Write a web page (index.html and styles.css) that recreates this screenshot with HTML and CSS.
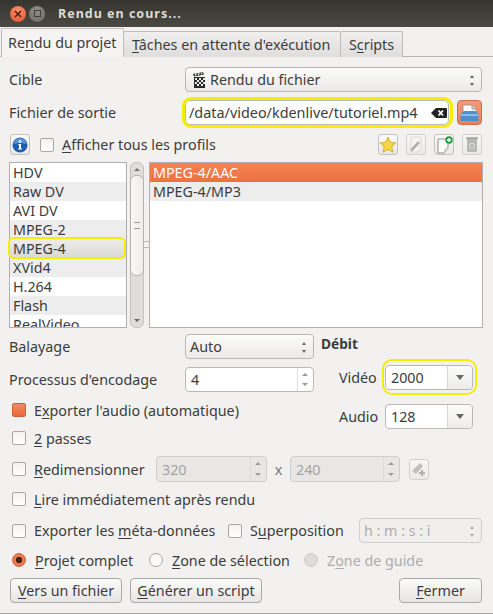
FILE: index.html
```html
<!DOCTYPE html>
<html lang="fr">
<head>
    <meta charset="UTF-8">
    <title>Rendu en cours...</title>
    <link rel="stylesheet" href="styles.css">
</head>
<body>
<div class="window">

    <!-- Title bar -->
    <div class="titlebar">
        <span class="win-btn win-close">
            <svg width="8" height="8" viewBox="0 0 8 8"><path d="M1 1L7 7M7 1L1 7" stroke="#4a1a10" stroke-width="1.5"/></svg>
        </span>
        <span class="win-btn win-max"><span class="win-max-box"></span></span>
        <span class="win-title">Rendu en cours...</span>
    </div>

    <!-- Tabs -->
    <div class="tabs">
        <div class="tab tab-active">Re<u>n</u>du du projet</div>
        <div class="tab"><u>T</u>âches en attente d'exécution</div>
        <div class="tab">S<u>c</u>ripts</div>
    </div>

    <div class="pane">
        <div class="row row-target">
            <span class="label">Cible</span>
            <div class="select select-target">
                <svg class="clap" width="13" height="16" viewBox="0 0 13 16">
                    <path d="M0 2L10 0L11 2.500L1 4.500Z" fill="#222"/>
                    <path d="M2 3.600L3.500 1.400M5 3L6.500 0.800M8 2.400L9.300 0.500" stroke="#eee" stroke-width="1.200"/>
                    <rect x="1" y="5" width="11" height="11" fill="#2b2b2b"/>
                    <path d="M2 6h2v2H2zM6 6h2v2H6zM10 6h2v2h-2zM4 8h2v2H4zM8 8h2v2H8zM2 10h2v2H2zM6 10h2v2H6zM10 10h2v2h-2zM4 12h2v2H4zM8 12h2v2H8z" fill="#e8e8e8"/>
                </svg>
                <span>Rendu du fichier</span>
                <span class="arrows"></span>
            </div>
        </div>

        <div class="row row-output">
            <span class="label">Fichier de sortie</span>
            <div class="input input-output">
                <span>/data/video/kdenlive/tutoriel.mp4</span>
                <svg width="16" height="10" viewBox="0 0 16 10"><path d="M0 5L5 0H15Q16 0 16 1V9Q16 10 15 10H5Z" fill="#222"/><path d="M7.500 2.500L12 7.500M12 2.500L7.500 7.500" stroke="#fff" stroke-width="1.800"/></svg>
            </div>
            <div class="file-btn">
                <svg width="19" height="18" viewBox="0 0 19 18">
                    <path d="M3 1H12L16 5V9H3Z" fill="#fbfbfb" stroke="#8a8f99" stroke-width="0.800"/>
                    <path d="M12 1V5H16" fill="#d5d8de" stroke="#8a8f99" stroke-width="0.800"/>
                    <path d="M0.500 10L4 7H15L18.500 10V17H0.500Z" fill="#4f8fd0"/>
                    <path d="M0.500 10H18.500V12H0.500Z" fill="#8fbbe6"/>
                </svg>
            </div>
        </div>

        <div class="row row-profiles">
            <div class="tool-btn info-btn">
                <svg width="16" height="16" viewBox="0 0 16 16"><circle cx="8" cy="8" r="7.500" fill="#1c5fb0"/><path d="M1.500 7A6.500 6 0 0 1 14.500 7Q8 5 1.500 7Z" fill="#5b95d8"/><circle cx="8" cy="4.500" r="1.300" fill="#fff"/><path d="M6.300 7H9V11.500H10V12.500H6V11.500H7V8H6.300Z" fill="#fff"/></svg>
            </div>
            <span class="check check-profiles"></span>
            <span class="check-label"><u>A</u>fficher tous les profils</span>
            <div class="tool-group">
                <div class="tool-btn">
                    <svg width="18" height="17" viewBox="0 0 18 17"><path d="M9 1L11.400 6.200L17 6.900L12.800 10.700L14 16.300L9 13.400L4 16.300L5.200 10.700L1 6.900L6.600 6.200Z" fill="#f6d743" stroke="#c9a227" stroke-width="0.800"/></svg>
                </div>
                <div class="tool-btn tool-off">
                    <svg width="16" height="17" viewBox="0 0 16 17"><path d="M3 1H13V12L10 16H3Z" fill="#f6f6f5" stroke="#c4c4c2" stroke-width="0.800"/><path d="M2 14L10 5L12 7L4 15.500Z" fill="#8b8b8b"/></svg>
                </div>
                <div class="tool-btn">
                    <svg width="17" height="18" viewBox="0 0 17 18"><path d="M2 3H12V12L8 17H2Z" fill="#fbfbfb" stroke="#777" stroke-width="0.800"/><path d="M8 17L8.500 12.500H12Z" fill="#ccc"/><circle cx="13" cy="4" r="3.700" fill="#1f9e3a"/><path d="M13 2V6M11 4H15" stroke="#fff" stroke-width="1.400"/></svg>
                </div>
                <div class="tool-btn tool-off">
                    <svg width="14" height="17" viewBox="0 0 14 17"><path d="M2 3H12V15Q12 16 11 16H3Q2 16 2 15Z" fill="#9b9b9b"/><rect x="1" y="1" width="12" height="2.500" rx="1" fill="#858585"/><circle cx="7" cy="10" r="2.700" fill="none" stroke="#d4d4d4" stroke-width="1"/></svg>
                </div>
            </div>
        </div>

        <!-- Format and profile lists -->
        <div class="lists">
            <div class="list list-formats">
                <div class="item">HDV</div>
                <div class="item">Raw DV</div>
                <div class="item">AVI DV</div>
                <div class="item">MPEG-2</div>
                <div class="item item-current">MPEG-4</div>
                <div class="item">XVid4</div>
                <div class="item">H.264</div>
                <div class="item">Flash</div>
                <div class="item">RealVideo</div>
            </div>
            <span class="item-mark"></span>
            <div class="scrollbar">
                <span class="scroll-arrow scroll-up"></span>
                <div class="scroll-thumb"><span class="grip"></span></div>
                <span class="scroll-arrow scroll-down"></span>
            </div>
            <span class="splitter"></span>
            <div class="list list-profiles">
                <div class="item item-selected">MPEG-4/AAC</div>
                <div class="item">MPEG-4/MP3</div>
            </div>
        </div>

        <!-- Encoding options and bitrate -->
        <div class="options">
            <div class="options-left">
                <div class="row row-scan">
                    <span class="label">Balayage</span>
                    <div class="select select-scan"><span>Auto</span><span class="arrows"></span></div>
                </div>
                <div class="row row-threads">
                    <span class="label">Processus d'encodage</span>
                    <div class="spin spin-threads"><span class="spin-value">4</span><span class="spin-btns"></span></div>
                </div>
                <div class="row row-audio">
                    <span class="check check-on"></span>
                    <span class="check-label">E<u>x</u>porter l'audio (automatique)</span>
                </div>
                <div class="row row-passes">
                    <span class="check"></span>
                    <span class="check-label"><u>2</u> passes</span>
                </div>
            </div>
            <div class="options-right">
                <div class="bitrate-title">Débit</div>
                <div class="row row-video">
                    <span class="bitrate-label">Vidéo</span>
                    <div class="combo combo-mark"><span class="combo-value">2000</span><span class="combo-btn"></span></div>
                </div>
                <div class="row row-audiorate">
                    <span class="bitrate-label">Audio</span>
                    <div class="combo"><span class="combo-value">128</span><span class="combo-btn"></span></div>
                </div>
            </div>
        </div>

        <div class="row row-resize">
            <span class="check"></span>
            <span class="check-label resize-label"><u>R</u>edimensionner</span>
            <div class="spin spin-off spin-width"><span class="spin-value">320</span><span class="spin-btns"></span></div>
            <span class="times">x</span>
            <div class="spin spin-off"><span class="spin-value">240</span><span class="spin-btns"></span></div>
            <div class="tool-btn tool-off link-btn">
                <svg width="16" height="16" viewBox="0 0 16 16"><path d="M1 10L9 2L12 5L5 13Z" fill="#a5a5a5"/><path d="M11 9V15M8 12H14" stroke="#8f8f8f" stroke-width="2"/></svg>
            </div>
        </div>

        <div class="row row-play">
            <span class="check"></span>
            <span class="check-label"><u>L</u>ire immédiatement après rendu</span>
        </div>

        <div class="row row-meta">
            <span class="check"></span>
            <span class="check-label meta-label">Exporter les <u>m</u>éta-données</span>
            <span class="check"></span>
            <span class="check-label overlay-label">S<u>u</u>perposition</span>
            <div class="select select-off"><span>h : m : s : i</span><span class="arrows"></span></div>
        </div>

        <div class="row row-range">
            <span class="radio radio-on"></span>
            <span class="check-label radio-label range-full"><u>P</u>rojet complet</span>
            <span class="radio"></span>
            <span class="check-label radio-label range-zone"><u>Z</u>one de sélection</span>
            <span class="radio radio-off"></span>
            <span class="check-label radio-label label-off">Z<u>o</u>ne de guide</span>
        </div>

        <div class="row row-buttons">
            <div class="button btn-file"><u>V</u>ers un fichier</div>
            <div class="button btn-script"><u>G</u>énérer un script</div>
            <div class="button btn-close"><u>F</u>ermer</div>
        </div>
    </div>
</div>
</body>
</html>
```

FILE: styles.css
```css
* { box-sizing: border-box; }

html, body {
    margin: 0;
    padding: 0;
}

body {
    width: 493px;
    height: 614px;
    overflow: hidden;
    background-color: #f2f1f0;
    font-family: "Noto Sans", "Open Sans", sans-serif;
    font-size: 14.3px;
    color: #3c3c3c;
}

u { text-underline-offset: 2px; }

.window {
    display: flex;
    flex-direction: column;
    height: 614px;
    border-bottom: 1px solid #a5a4a2;
}

/* Title bar */
.titlebar {
    height: 27px;
    display: flex;
    align-items: center;
    padding-left: 10px;
    background: linear-gradient(#35342f, #4a4944);
}

.win-btn {
    width: 16px;
    height: 16px;
    border-radius: 50%;
    display: flex;
    align-items: center;
    justify-content: center;
}

.win-close { background: radial-gradient(circle at 50% 30%, #f8906a, #e0502a); }

.win-max {
    margin-left: 3px;
    background: radial-gradient(circle at 50% 30%, #8f8e88, #6a6963);
}

.win-max-box {
    width: 7px;
    height: 7px;
    border: 1px solid #3e3d39;
}

.win-title {
    margin-left: 13px;
    font-weight: 700;
    font-size: 12.5px;
    letter-spacing: 1px;
    color: #dfdbd2;
}

/* Tabs */
.tabs {
    height: 30px;
    display: flex;
    align-items: flex-end;
    padding-left: 1px;
    border-bottom: 1px solid #b6b5b3;
    background-color: #f2f1f0;
}

.tab {
    height: 26px;
    padding: 0 8px;
    line-height: 25px;
    background: linear-gradient(#f0efee, #dfdedc);
    border: 1px solid #bdbcba;
    border-bottom: none;
    border-left: none;
    border-radius: 2px 2px 0 0;
    margin-bottom: -1px;
    white-space: nowrap;
}

.tab:nth-child(2) { width: 217px; padding-left: 8px; }
.tab:nth-child(3) { width: 62px; }

.tab-active {
    width: 123px;
    height: 29px;
    padding: 0 6px;
    line-height: 27px;
    background: #f5f4f3;
    border-left: 1px solid #bdbcba;
    border-bottom: 1px solid #f5f4f3;
    position: relative;
}

/* Main pane */
.pane {
    flex: 1;
    padding: 10px 10px 0 9px;
}

.row {
    display: flex;
    align-items: center;
}

.label { width: 176px; }

.row-target { height: 25px; }
.row-output { height: 25px; margin-top: 8px; }
.row-profiles { height: 21px; margin-top: 9px; padding-left: 1px; }

/* Dropdowns, inputs and spin boxes */
.select, .input, .spin, .combo {
    height: 25px;
    display: flex;
    align-items: center;
    background-color: #fff;
    border: 1px solid #b9b8b6;
    border-radius: 4px;
}

.select {
    padding: 0 0 0 7px;
    background: linear-gradient(#fbfbfa, #ebeae8);
    justify-content: space-between;
}

.select-target { width: 297px; }
.select-scan { width: 129px; padding-left: 4px; }

.clap { margin-right: 4px; flex: none; }
.select-target > span:first-of-type { flex: 1; }

.arrows {
    position: relative;
    width: 16px;
    height: 14px;
    flex: none;
}

.arrows::before, .arrows::after {
    content: "";
    position: absolute;
    left: 5px;
    border-left: 2.5px solid transparent;
    border-right: 2.5px solid transparent;
}

.arrows::before { top: 2px; border-bottom: 3px solid #666; }
.arrows::after { bottom: 1px; border-top: 3px solid #666; }

.input-output {
    width: 264px;
    position: relative;
    justify-content: space-between;
    padding: 0 1px 0 3px;
    border-radius: 5px;
    font-size: 14.4px;
}

.input-output svg { flex: none; }

.input-output::before {
    content: "";
    position: absolute;
    inset: -4px -5px -4px -4px;
    border: 3px solid #f4ee00;
    border-radius: 9px;
}

.file-btn {
    width: 25px;
    height: 25px;
    margin-left: 8px;
    display: flex;
    align-items: center;
    justify-content: center;
    background: linear-gradient(#f49a78, #ec8058);
    border: 1px solid #c8704d;
    border-radius: 4px;
}

.tool-btn {
    width: 20px;
    height: 21px;
    display: flex;
    align-items: center;
    justify-content: center;
    flex: none;
    background: linear-gradient(#fbfbfa, #e9e8e6);
    border: 1px solid #c2c1bf;
    border-radius: 3px;
}

.tool-off { opacity: 0.65; }

.tool-group {
    margin-left: auto;
    margin-right: 1px;
    display: flex;
    gap: 8px;
}

/* Checks and radios */
.check {
    width: 14px;
    height: 14px;
    flex: none;
    background: linear-gradient(#f3f2f1, #fff);
    border: 1px solid #a9a8a6;
    border-radius: 2px;
}

.check-on {
    background: linear-gradient(#f28a60, #e8683c);
    border-color: #c9623c;
}

.check-label {
    margin-left: 8px;
    white-space: nowrap;
}

.check-profiles { margin-left: 10px; }

.radio {
    width: 14px;
    height: 14px;
    flex: none;
    border-radius: 50%;
    background: linear-gradient(#f5f4f3, #fff);
    border: 1px solid #a9a8a6;
}

.radio-on {
    background: radial-gradient(circle, #4a2417 0 3px, #ee7a4e 3.5px);
    border-color: #c9623c;
}

.radio-off {
    background: #dddcda;
    border-color: #cfcecc;
}

.radio-label { margin-left: 9px; }
.label-off { color: #aeadab; }

/* Lists */
.lists {
    position: relative;
    display: flex;
    height: 166px;
    margin-top: 7px;
}

.list {
    height: 166px;
    overflow: hidden;
    background-color: #fff;
    border: 1px solid #b0afad;
}

.list-formats { width: 118px; }
.list-profiles { width: 334px; }

.item {
    height: 19px;
    line-height: 19px;
    padding-left: 3px;
    white-space: nowrap;
}

.item:nth-child(even) { background-color: #ededed; }

.item-current { background: linear-gradient(#eeedec, #dad9d6); }

/* yellow marking drawn over the list */
.item-mark {
    position: absolute;
    left: -1px;
    top: 75px;
    width: 118px;
    height: 22px;
    border: 2px solid #f4ee00;
    border-radius: 6px;
}

.item-selected {
    background: linear-gradient(#f58252, #ee7040);
    color: #fff;
}

.scrollbar {
    width: 14px;
    height: 166px;
    margin-left: 3px;
    position: relative;
    background: #dfdedc;
    border: 1px solid #c4c3c1;
    border-radius: 6px;
}

.scroll-arrow {
    position: absolute;
    left: 3px;
    border-left: 3px solid transparent;
    border-right: 3px solid transparent;
}

.scroll-up { top: 5px; border-bottom: 3px solid #777; }
.scroll-down { bottom: 5px; border-top: 3px solid #666; }

.scroll-thumb {
    position: absolute;
    left: -1px;
    top: 12px;
    width: 14px;
    height: 101px;
    display: flex;
    align-items: center;
    justify-content: center;
    background: linear-gradient(90deg, #f8f8f7, #eeedec);
    border: 1px solid #b4b3b1;
    border-radius: 6px;
}

.grip {
    width: 6px;
    height: 7px;
    border-top: 1px solid #999;
    border-bottom: 1px solid #999;
}

.splitter {
    width: 5px;
    margin: 79px 0 0 0;
    height: 7px;
    border-top: 1px solid #bbb;
    border-bottom: 1px solid #bbb;
}

/* Options block */
.options {
    display: flex;
    margin-top: 6px;
    height: 118px;
}

.options-left { width: 312px; }
.options-right { flex: 1; }

.row-scan { height: 25px; }
.row-threads { height: 25px; margin-top: 8px; }
.row-audio { height: 16px; margin-top: 10px; padding-left: 3px; }
.row-passes { height: 16px; margin-top: 12px; padding-left: 3px; }

.spin { padding-left: 5px; }
.spin-threads { width: 129px; }

.spin-value { flex: 1; }

.spin-btns {
    width: 16px;
    height: 100%;
    position: relative;
    border-left: 1px solid #dddcda;
    flex: none;
}

.spin-btns::before, .spin-btns::after {
    content: "";
    position: absolute;
    left: 4px;
    border-left: 3px solid transparent;
    border-right: 3px solid transparent;
}

.spin-btns::before { top: 5px; border-bottom: 3px solid #9a9a9a; }
.spin-btns::after { bottom: 5px; border-top: 3px solid #9a9a9a; }

.bitrate-title {
    height: 20px;
    font-weight: 700;
    font-size: 13.7px;
    line-height: 20px;
}

.bitrate-label { width: 46px; margin-left: 18px; flex: none; }

.row-video { height: 25px; margin-top: 11px; }
.row-audiorate { height: 25px; margin-top: 14px; }

.combo {
    width: 88px;
    padding-left: 5px;
}

.combo-value { flex: 1; }

.combo-btn {
    width: 25px;
    height: 100%;
    flex: none;
    display: flex;
    align-items: center;
    justify-content: center;
    border-left: 1px solid #d8d7d5;
    background: linear-gradient(#fbfbfa, #eeedeb);
    border-radius: 0 4px 4px 0;
}

.combo-btn::after {
    content: "";
    border-left: 4px solid transparent;
    border-right: 4px solid transparent;
    border-top: 5px solid #666;
}

.combo-mark { position: relative; }

.combo-mark::before {
    content: "";
    position: absolute;
    inset: -7px -5px -6px -4px;
    border: 2px solid #f4ee00;
    border-radius: 10px;
}

/* Lower rows */
.row-resize { height: 26px; margin-top: 4px; padding-left: 3px; }

.resize-label { width: 111px; flex: none; margin-right: 11px; }

.spin-off {
    width: 110px;
    height: 26px;
    background: #e8e7e5;
    border-color: #d0cfcd;
    color: #a5a4a2;
}

.spin-width { width: 111px; }

.times {
    width: 23px;
    text-align: center;
    color: #777;
    flex: none;
}

.link-btn {
    width: 20px;
    height: 21px;
    margin-left: 9px;
}

.row-play { height: 16px; margin-top: 9px; padding-left: 3px; }

.row-meta { height: 25px; margin-top: 11px; padding-left: 3px; }

.meta-label { width: 186px; flex: none; margin-right: 8px; }
.overlay-label { width: 108px; flex: none; margin-right: 0; }

.select-off {
    width: 123px;
    margin-right: 1px;
    padding-left: 4px;
    background: #f0efee;
    border-color: #d0cfcd;
    color: #aeadab;
    margin-left: auto;
}

.select-off .arrows::before { border-bottom-color: #aaa; }
.select-off .arrows::after { border-top-color: #aaa; }

.row-range { height: 16px; margin-top: 9px; padding-left: 3px; }
.range-full { width: 105px; flex: none; margin-right: 9px; }
.range-zone { width: 123px; flex: none; margin-right: 9px; }

.row-buttons { height: 25px; margin-top: 10px; padding-left: 1px; }

.button {
    height: 25px;
    line-height: 23px;
    text-align: center;
    background: linear-gradient(#fbfbfa, #e6e5e3);
    border: 1px solid #aaa9a7;
    border-radius: 4px;
    white-space: nowrap;
}

.btn-file { width: 112px; }
.btn-script { width: 132px; margin-left: 8px; }
.btn-close { width: 83px; margin-left: auto; margin-right: 1px; }
```
